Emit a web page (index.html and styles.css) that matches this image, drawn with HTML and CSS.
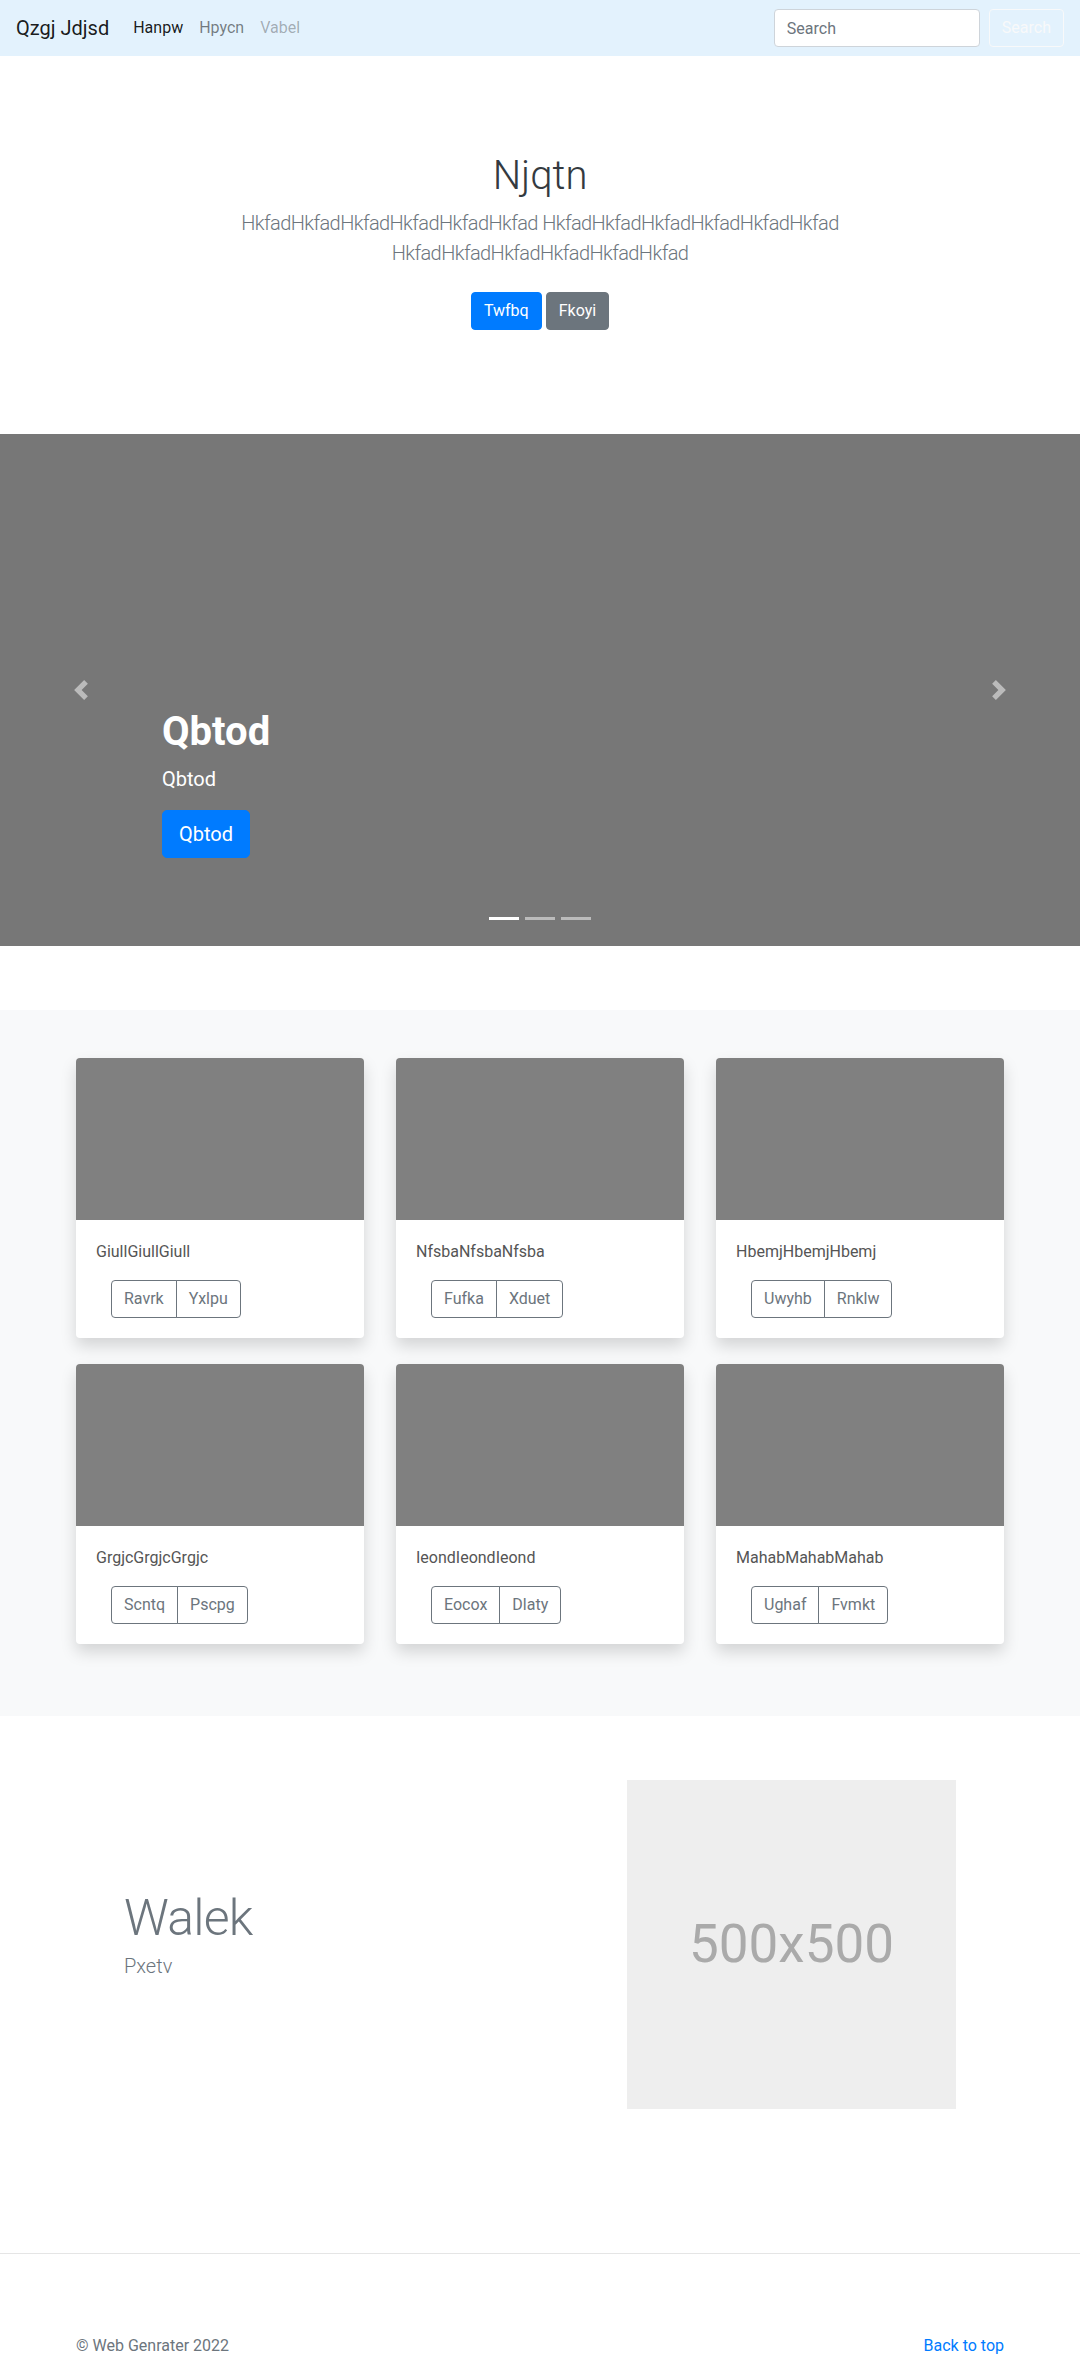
FILE: index.html
```html
<!DOCTYPE html>
<html lang="en">
<head>
<meta charset="utf-8">
<title>Qzgj Jdjsd</title>
<link rel="stylesheet" href="styles.css">
</head>
<body>
<nav class="navbar">
  <a class="brand" href="#">Qzgj Jdjsd</a>
  <ul class="nav">
    <li><a class="nav-link active" href="#">Hanpw</a></li>
    <li><a class="nav-link" href="#">Hpycn</a></li>
    <li><a class="nav-link disabled" href="#">Vabel</a></li>
  </ul>
  <form class="search">
    <input class="search-input" type="search" placeholder="Search">
    <button class="btn btn-outline-light" type="button">Search</button>
  </form>
</nav>

<section class="hero">
  <div class="hero-inner">
    <h1 class="hero-title">Njqtn</h1>
    <p class="lead">HkfadHkfadHkfadHkfadHkfadHkfad HkfadHkfadHkfadHkfadHkfadHkfad HkfadHkfadHkfadHkfadHkfadHkfad</p>
    <div class="hero-actions">
      <a class="btn btn-primary" href="#">Twfbq</a>
      <a class="btn btn-secondary" href="#">Fkoyi</a>
    </div>
  </div>
</section>

<section class="carousel">
  <div class="caption">
    <h1 class="caption-title">Qbtod</h1>
    <p class="caption-text">Qbtod</p>
    <a class="btn btn-primary btn-lg" href="#">Qbtod</a>
  </div>
  <a class="control control-prev" href="#" aria-label="Previous">
    <svg viewBox="0 0 8 8" width="20" height="20"><path d="M5.25 0l-4 4 4 4 1.5-1.5-2.5-2.5 2.5-2.5-1.5-1.5z"/></svg>
  </a>
  <a class="control control-next" href="#" aria-label="Next">
    <svg viewBox="0 0 8 8" width="20" height="20"><path d="M2.75 0l-1.5 1.5 2.5 2.5-2.5 2.5 1.5 1.5 4-4-4-4z"/></svg>
  </a>
  <ol class="indicators">
    <li class="active"></li>
    <li></li>
    <li></li>
  </ol>
</section>

<section class="album">
  <div class="card-grid">
    <div class="card">
      <div class="card-img"></div>
      <div class="card-body">
        <p class="card-text">GiullGiullGiull</p>
        <div class="btn-group"><a class="btn btn-outline">Ravrk</a><a class="btn btn-outline">Yxlpu</a></div>
      </div>
    </div>
    <div class="card">
      <div class="card-img"></div>
      <div class="card-body">
        <p class="card-text">NfsbaNfsbaNfsba</p>
        <div class="btn-group"><a class="btn btn-outline">Fufka</a><a class="btn btn-outline">Xduet</a></div>
      </div>
    </div>
    <div class="card">
      <div class="card-img"></div>
      <div class="card-body">
        <p class="card-text">HbemjHbemjHbemj</p>
        <div class="btn-group"><a class="btn btn-outline">Uwyhb</a><a class="btn btn-outline">Rnklw</a></div>
      </div>
    </div>
    <div class="card">
      <div class="card-img"></div>
      <div class="card-body">
        <p class="card-text">GrgjcGrgjcGrgjc</p>
        <div class="btn-group"><a class="btn btn-outline">Scntq</a><a class="btn btn-outline">Pscpg</a></div>
      </div>
    </div>
    <div class="card">
      <div class="card-img"></div>
      <div class="card-body">
        <p class="card-text">IeondIeondIeond</p>
        <div class="btn-group"><a class="btn btn-outline">Eocox</a><a class="btn btn-outline">Dlaty</a></div>
      </div>
    </div>
    <div class="card">
      <div class="card-img"></div>
      <div class="card-body">
        <p class="card-text">MahabMahabMahab</p>
        <div class="btn-group"><a class="btn btn-outline">Ughaf</a><a class="btn btn-outline">Fvmkt</a></div>
      </div>
    </div>
  </div>
</section>

<section class="featurette">
  <div class="featurette-inner">
    <div class="featurette-text">
      <h2 class="featurette-heading">Walek</h2>
      <p class="featurette-lead">Pxetv</p>
    </div>
    <div class="placeholder">500x500</div>
  </div>
</section>

<hr class="divider">

<footer class="footer">
  <div class="footer-inner">
    <p class="copy">© Web Genrater 2022</p>
    <a class="back" href="#">Back to top</a>
  </div>
</footer>
</body>
</html>
```

FILE: styles.css
```css
* { box-sizing: border-box; }

body {
  margin: 0;
  font-family: "Segoe UI", Roboto, "Noto Sans", "Liberation Sans", sans-serif;
  font-size: 16px;
  line-height: 1.5;
  color: #212529;
  background: #fff;
}

a { text-decoration: none; }

/* Navbar */
.navbar {
  display: flex;
  align-items: center;
  height: 56px;
  padding: 8px 16px;
  background: #e3f2fd;
}
.brand {
  font-size: 20px;
  line-height: 30px;
  padding: 5px 0;
  margin-right: 16px;
  color: rgba(0,0,0,.9);
}
.nav {
  display: flex;
  list-style: none;
  margin: 0;
  padding: 0;
}
.nav-link {
  display: block;
  padding: 8px;
  color: rgba(0,0,0,.5);
}
.nav-link.active { color: rgba(0,0,0,.9); }
.nav-link.disabled { color: rgba(0,0,0,.3); }
.search {
  margin-left: auto;
  display: flex;
  align-items: center;
}
.search-input {
  width: 206px;
  height: 38px;
  padding: 6px 12px;
  font: inherit;
  color: #495057;
  border: 1px solid #ced4da;
  border-radius: 4px;
  background: #fff;
  margin-right: 9px;
}
.search-input::placeholder { color: #6c757d; }

/* Buttons */
.btn {
  display: inline-block;
  font-family: inherit;
  font-size: 16px;
  line-height: 24px;
  padding: 6px 12px;
  border: 1px solid transparent;
  border-radius: 4px;
  cursor: pointer;
  background: transparent;
}
.btn-primary { background: #007bff; border-color: #007bff; color: #fff; }
.btn-secondary { background: #6c757d; border-color: #6c757d; color: #fff; }
.btn-outline-light { border-color: #f8f9fa; color: #f8f9fa; }
.btn-lg { font-size: 20px; line-height: 30px; padding: 8px 16px; border-radius: 5px; }

/* Hero */
.hero {
  padding: 96px 16px;
  text-align: center;
}
.hero-inner {
  max-width: 700px;
  margin: 0 auto;
}
.hero-title {
  font-size: 40px;
  font-weight: 300;
  line-height: 1.2;
  margin: 0 0 8px;
  color: #343a40;
}
.lead {
  font-size: 20px;
  font-weight: 300;
  line-height: 30px;
  letter-spacing: -0.6px;
  color: #6c757d;
  margin: 0 0 16px;
}
.hero-actions {
  display: flex;
  justify-content: center;
  gap: 4px;
  padding: 8px 0;
}

/* Carousel */
.carousel {
  position: relative;
  height: 512px;
  background: #777;
  display: flex;
  flex-direction: column;
  justify-content: flex-end;
  padding: 0 15% 88px;
}
.caption { color: #fff; }
.caption-title {
  font-size: 40px;
  font-weight: 700;
  line-height: 48px;
  margin: 0 0 8px;
}
.caption-text {
  font-size: 20px;
  line-height: 30px;
  margin: 0 0 16px;
}
.control {
  position: absolute;
  top: 0;
  bottom: 0;
  width: 15%;
  display: flex;
  align-items: center;
  justify-content: center;
  opacity: .5;
}
.control svg { fill: #fff; display: block; }
.control-prev { left: 0; }
.control-next { right: 0; }
.indicators {
  position: absolute;
  left: 0;
  right: 0;
  bottom: 26px;
  display: flex;
  justify-content: center;
  gap: 6px;
  list-style: none;
  margin: 0;
  padding: 0;
}
.indicators li {
  width: 30px;
  height: 3px;
  background: rgba(255,255,255,.5);
}
.indicators li.active { background: #fff; }

/* Album */
.album {
  margin-top: 64px;
  background: #f8f9fa;
  padding: 48px 0 72px;
}
.card-grid {
  width: 928px;
  margin: 0 auto;
  display: grid;
  grid-template-columns: repeat(3, 288px);
  column-gap: 32px;
  row-gap: 26px;
}
.card {
  background: #fff;
  border-radius: 4px;
  overflow: hidden;
  box-shadow: 0 8px 16px rgba(0,0,0,.15);
}
.card-img {
  height: 162px;
  background: #808080;
}
.card-body { padding: 20px; }
.card-text {
  margin: 0 0 16px;
  color: #555;
}
.btn-group {
  display: inline-flex;
  margin-left: 15px;
}
.btn-outline {
  border-color: #6c757d;
  color: #6c757d;
}
.btn-group .btn:first-child { border-radius: 4px 0 0 4px; }
.btn-group .btn:last-child { border-radius: 0 4px 4px 0; margin-left: -1px; }

/* Featurette */
.featurette { padding: 64px 0; }
.featurette-inner {
  width: 928px;
  margin: 0 auto;
  display: flex;
  align-items: center;
  justify-content: space-between;
}
.featurette-text { padding-left: 48px; }
.featurette-heading {
  font-size: 50px;
  font-weight: 300;
  line-height: 1;
  letter-spacing: -0.8px;
  color: #6c757d;
  margin: 0 0 8px;
}
.featurette-lead {
  font-size: 20px;
  font-weight: 300;
  line-height: 30px;
  color: #6c757d;
  margin: 0 0 16px;
}
.placeholder {
  width: 329px;
  height: 329px;
  margin-right: 48px;
  background: #eee;
  color: #aaa;
  font-size: 53px;
  display: flex;
  align-items: center;
  justify-content: center;
}

/* Divider & footer */
.divider {
  margin: 80px 0;
  border: 0;
  border-top: 1px solid rgba(0,0,0,.1);
}
.footer { padding-bottom: 48px; }
.footer-inner {
  width: 928px;
  margin: 0 auto;
  display: flex;
  justify-content: space-between;
  align-items: flex-start;
}
.copy { margin: 0; color: #6c757d; }
.back { color: #007bff; }
```
